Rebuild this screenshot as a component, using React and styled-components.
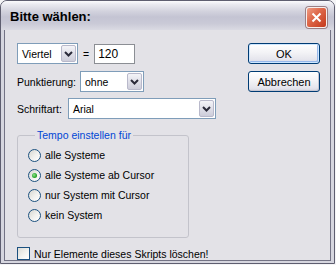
import React from 'react';
import styled, { createGlobalStyle } from 'styled-components';

const GlobalStyle = createGlobalStyle`
  html, body {
    margin: 0;
    padding: 0;
    background: #f4f4f6;
  }
  body {
    font-family: "Liberation Sans", Arial, sans-serif;
    font-size: 10.5px;
    color: #000;
  }
`;

const Window = styled.div`
  width: 335px;
  height: 264px;
  box-sizing: border-box;
  display: flex;
  flex-direction: column;
  border: 1px solid #5e5e70;
  border-radius: 7px 7px 0 0;
  background: #d6d6df;
  overflow: hidden;
`;

const TitleBar = styled.div`
  height: 29px;
  flex: none;
  display: flex;
  align-items: center;
  justify-content: space-between;
  padding: 0 7px 0 9px;
  background: linear-gradient(
    to bottom,
    #fbfbfd 0%,
    #e9e9f0 12%,
    #d3d3de 35%,
    #c4c4d3 55%,
    #cacad7 78%,
    #dadae3 100%
  );
`;

const Title = styled.span`
  font-family: "Liberation Sans", Arial, sans-serif;
  font-weight: bold;
  font-size: 13px;
  color: #000;
  padding-top: 2px;
`;

const CloseButton = styled.div`
  width: 19px;
  height: 19px;
  margin-top: 4px;
  border: 1px solid #f6f0ee;
  border-radius: 3px;
  display: flex;
  align-items: center;
  justify-content: center;
  background: linear-gradient(135deg, #ee9c84 0%, #df6a4c 40%, #c4381c 100%);
  box-shadow: 0 0 0 1px #9a7f86;
`;

const Frame = styled.div`
  flex: 1;
  display: flex;
  padding: 0 3px 2px 3px;
`;

const Client = styled.div`
  flex: 1;
  display: flex;
  justify-content: space-between;
  border: 1px solid #737385;
  border-top: none;
  background: #e3e2e7;
  padding: 13px 10px 0 12px;
`;

const LeftCol = styled.div`
  display: flex;
  flex-direction: column;
`;

const Row = styled.div`
  display: flex;
  align-items: center;
  height: 21px;
  gap: ${p => p.$gap || 4}px;
  margin-bottom: ${p => p.$mb || 0}px;
`;

const Combo = styled.div`
  width: ${p => p.$w}px;
  height: 21px;
  box-sizing: border-box;
  border: 1px solid #7f9db9;
  background: #fff;
  display: flex;
  align-items: center;
  justify-content: space-between;
  padding: 1px;
`;

const ComboText = styled.span`
  padding-left: 3px;
`;

const DropButton = styled.div`
  width: 15px;
  height: 17px;
  box-sizing: border-box;
  border: 1px solid #b9b9cb;
  border-radius: 2px;
  background: linear-gradient(to bottom, #f4f4f8 0%, #dcdce6 60%, #cdcdda 100%);
  display: flex;
  align-items: center;
  justify-content: center;
`;

const Label = styled.span`
  white-space: nowrap;
`;

const TextInput = styled.div`
  width: 41px;
  height: 20px;
  box-sizing: border-box;
  border: 1px solid #8b8e94;
  background: #fff;
  display: flex;
  align-items: center;
  padding-left: 3px;
  font-size: 12px;
`;

const Group = styled.fieldset`
  margin: 10px 0 0 0;
  padding: 3px 0 0 10px;
  width: 172px;
  height: 109px;
  box-sizing: border-box;
  border: 1px solid #c3c3cb;
  border-radius: 3px;
`;

const Legend = styled.legend`
  color: #0046d5;
  padding: 0 2px;
  margin-left: 7px;
  line-height: 13px;
`;

const OptionRow = styled.div`
  display: flex;
  align-items: center;
  height: 20px;
  gap: 4px;
`;

const Radio = styled.span`
  width: 13px;
  height: 13px;
  box-sizing: border-box;
  border-radius: 50%;
  border: 1px solid #1c5180;
  background: linear-gradient(135deg, #d6d6d0 0%, #f2f2ef 55%, #ffffff 100%);
  display: flex;
  align-items: center;
  justify-content: center;
  flex: none;
  &::after {
    content: '';
    display: ${p => (p.$checked ? 'block' : 'none')};
    width: 5px;
    height: 5px;
    border-radius: 50%;
    background: radial-gradient(circle at 40% 40%, #8fe28f 0%, #2ba82b 60%, #168316 100%);
  }
`;

const CheckRow = styled.div`
  display: flex;
  align-items: center;
  gap: 4px;
  margin-top: 9px;
`;

const CheckBox = styled.span`
  width: 13px;
  height: 13px;
  box-sizing: border-box;
  border: 1px solid #1c5180;
  background: linear-gradient(135deg, #dcdcd7 0%, #f4f4f1 60%, #ffffff 100%);
  flex: none;
`;

const RightCol = styled.div`
  display: flex;
  flex-direction: column;
  gap: 7px;
`;

const Button = styled.div`
  width: 72px;
  height: 21px;
  box-sizing: border-box;
  border: 1px solid #003c74;
  border-radius: 3px;
  display: flex;
  align-items: center;
  justify-content: center;
  background: linear-gradient(to bottom, #ffffff 0%, #f3f3f6 45%, #e4e4ec 85%, #d3d3de 100%);
  box-shadow: ${p =>
    p.$default
      ? 'inset 0 0 0 1px #cee7ff, inset -1px -1px 0 1px #98b8ea'
      : 'inset -1px -1px 0 0 #c6c6d2'};
  font-size: 11px;
`;

const Chevron = () => (
  <svg width="9" height="6" viewBox="0 0 9 6">
    <path d="M1 1 L4.5 4.5 L8 1" fill="none" stroke="#2b2b3a" strokeWidth="2" />
  </svg>
);

const CloseX = () => (
  <svg width="11" height="11" viewBox="0 0 11 11">
    <path d="M1.5 1.5 L9.5 9.5 M9.5 1.5 L1.5 9.5" stroke="#fff" strokeWidth="2" />
  </svg>
);

const options = [
  { label: 'alle Systeme', checked: false },
  { label: 'alle Systeme ab Cursor', checked: true },
  { label: 'nur System mit Cursor', checked: false },
  { label: 'kein System', checked: false },
];

const App = () => (
  <>
    <GlobalStyle />
    <Window>
      <TitleBar>
        <Title>Bitte wählen:</Title>
        <CloseButton>
          <CloseX />
        </CloseButton>
      </TitleBar>
      <Frame>
        <Client>
          <LeftCol>
            <Row $gap={5} $mb={7}>
              <Combo $w={61}>
                <ComboText>Viertel</ComboText>
                <DropButton><Chevron /></DropButton>
              </Combo>
              <Label>=</Label>
              <TextInput>120</TextInput>
            </Row>
            <Row $gap={4} $mb={6}>
              <Label>Punktierung:</Label>
              <Combo $w={64}>
                <ComboText>ohne</ComboText>
                <DropButton><Chevron /></DropButton>
              </Combo>
            </Row>
            <Row $gap={6}>
              <Label>Schriftart:</Label>
              <Combo $w={148}>
                <ComboText>Arial</ComboText>
                <DropButton><Chevron /></DropButton>
              </Combo>
            </Row>
            <Group>
              <Legend>Tempo einstellen für</Legend>
              {options.map(o => (
                <OptionRow key={o.label}>
                  <Radio $checked={o.checked} />
                  <span>{o.label}</span>
                </OptionRow>
              ))}
            </Group>
            <CheckRow>
              <CheckBox />
              <span>Nur Elemente dieses Skripts löschen!</span>
            </CheckRow>
          </LeftCol>
          <RightCol>
            <Button $default>OK</Button>
            <Button>Abbrechen</Button>
          </RightCol>
        </Client>
      </Frame>
    </Window>
  </>
);

export default App;
